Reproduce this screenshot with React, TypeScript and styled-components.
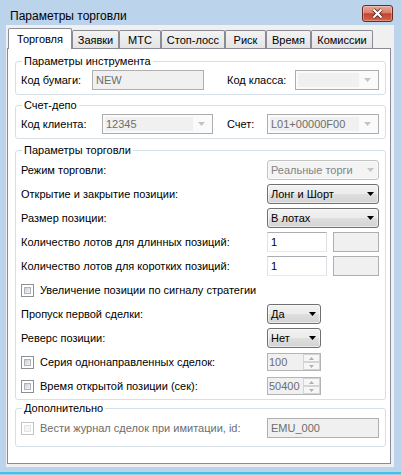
import styled, { createGlobalStyle } from 'styled-components';

const GlobalStyle = createGlobalStyle`
  html, body {
    margin: 0;
    padding: 0;
  }
  body {
    width: 401px;
    height: 475px;
    overflow: hidden;
    font-family: "Liberation Sans", Arial, sans-serif;
    font-size: 11px;
    color: #000;
  }
  * {
    box-sizing: border-box;
  }
`;

const Window = styled.div`
  width: 401px;
  height: 475px;
  display: flex;
  flex-direction: column;
  background: #bcd3ec;
`;

const TitleBar = styled.div`
  flex: none;
  height: 25px;
  display: flex;
  align-items: flex-start;
  justify-content: space-between;
  padding: 0 8px 0 10px;
`;

const Caption = styled.div`
  margin-top: 9px;
  font-size: 12px;
  line-height: 14px;
`;

const CloseButton = styled.div`
  margin-top: 5px;
  width: 31px;
  height: 17px;
  border: 1px solid #6b2a22;
  border-radius: 3px;
  background: linear-gradient(#e9a796, #d9806d 45%, #c4432d 52%, #d3654f);
  box-shadow: inset 0 0 0 1px rgba(255, 255, 255, 0.3);
  display: flex;
  align-items: center;
  justify-content: center;
`;

const Client = styled.div`
  flex: none;
  height: 442px;
  margin: 0 7px 0 6px;
  background: #f0f0f0;
  display: flex;
  flex-direction: column;
`;

const FrameBottom = styled.div`
  flex: 1;
  background: linear-gradient(#bcd3ec 0 5px, #3cc4e8 5px 7px, #a8cbe8 7px);
`;

const TabStrip = styled.div`
  flex: none;
  height: 23px;
  display: flex;
  align-items: flex-end;
  padding-left: 2px;
`;

const Tab = styled.div<{ $w: number; $active?: boolean }>`
  flex: none;
  width: ${({ $w }) => $w}px;
  height: ${({ $active }) => ($active ? 21 : 18)}px;
  margin-bottom: ${({ $active }) => ($active ? -1 : 0)}px;
  position: relative;
  z-index: ${({ $active }) => ($active ? 1 : 0)};
  border: 1px solid #898c95;
  border-bottom: none;
  border-radius: 2px 2px 0 0;
  background: ${({ $active }) =>
    $active ? '#fff' : 'linear-gradient(#f3f3f3, #e4e4e4)'};
  display: flex;
  align-items: center;
  justify-content: center;
  white-space: nowrap;
`;

const Panel = styled.div`
  flex: 1;
  margin: 0 3px 3px 1px;
  padding: 5px 4px 0 7px;
  background: #fff;
  border: 1px solid #898c95;
  display: flex;
  flex-direction: column;
`;

const Group = styled.fieldset<{ $top?: number; $pt?: number; $pb?: number }>`
  margin: ${({ $top }) => $top ?? 0}px 0 0 0;
  min-width: 0;
  min-inline-size: 0;
  padding: ${({ $pt }) => $pt ?? 1}px 6px ${({ $pb }) => $pb ?? 3}px 5px;
  border: 1px solid #d5dfe5;
  border-radius: 3px;
`;

const Legend = styled.legend`
  padding: 0 2px;
  margin-left: 1px;
  line-height: 14px;
`;

const Row = styled.div<{ $h?: number }>`
  height: ${({ $h }) => $h ?? 24}px;
  display: flex;
  align-items: center;
`;

const Label = styled.span<{ $w: number; $ml?: number; $off?: boolean }>`
  flex: none;
  width: ${({ $w }) => $w}px;
  margin-left: ${({ $ml }) => $ml ?? 0}px;
  white-space: nowrap;
  color: ${({ $off }) => ($off ? '#6d6d6d' : '#000')};
`;

const TextBox = styled.div<{ $w: number; $off?: boolean; $ml?: number }>`
  flex: none;
  width: ${({ $w }) => $w}px;
  height: 20px;
  margin-left: ${({ $ml }) => $ml ?? 0}px;
  padding-left: 3px;
  border: 1px solid;
  border-color: ${({ $off }) =>
    $off ? '#afafaf' : '#abadb3 #dbdfe6 #e3e9ef #e2e3ea'};
  background: ${({ $off }) => ($off ? '#f0f0f0' : '#fff')};
  color: ${({ $off }) => ($off ? '#6d6d6d' : '#000')};
  line-height: 18px;
  white-space: nowrap;
`;

const DropList = styled.div<{ $w: number; $off?: boolean }>`
  flex: none;
  width: ${({ $w }) => $w}px;
  height: 20px;
  padding: 0 4px 0 3px;
  border: 1px solid ${({ $off }) => ($off ? '#c2c2c2' : '#707070')};
  border-radius: 3px;
  background: ${({ $off }) =>
    $off
      ? '#f4f4f4'
      : 'linear-gradient(#f2f2f2, #ebebeb 50%, #dfdfdf 50%, #d3d3d3)'};
  box-shadow: inset 0 0 0 1px rgba(255, 255, 255, 0.55);
  color: ${({ $off }) => ($off ? '#838383' : '#000')};
  display: flex;
  align-items: center;
  justify-content: space-between;
  white-space: nowrap;
`;

const EditCombo = styled.div<{ $w: number }>`
  flex: none;
  width: ${({ $w }) => $w}px;
  height: 20px;
  padding: 2px;
  border: 1px solid #adadad;
  background: #fafafa;
  display: flex;
`;

const EditField = styled.div`
  flex: 1;
  padding-left: 1px;
  background: #f0f0f0;
  color: #6d6d6d;
  line-height: 14px;
  white-space: nowrap;
`;

const ArrowCell = styled.div`
  flex: none;
  width: 17px;
  display: flex;
  align-items: center;
  justify-content: center;
`;

const CheckLabel = styled.span<{ $w: number; $off?: boolean }>`
  flex: none;
  width: ${({ $w }) => $w}px;
  display: flex;
  align-items: center;
  gap: 6px;
  white-space: nowrap;
  color: ${({ $off }) => ($off ? '#6d6d6d' : '#000')};
`;

const CheckBox = styled.span<{ $off?: boolean }>`
  flex: none;
  width: 13px;
  height: 13px;
  padding: 2px;
  border: 1px solid ${({ $off }) => ($off ? '#c4c4c4' : '#8e8f8f')};
  background: #fff;
  display: flex;
  &::after {
    content: '';
    flex: 1;
    border: 1px solid ${({ $off }) => ($off ? '#e4e4e4' : '#aeb3b9')};
    background: ${({ $off }) =>
      $off ? '#f4f4f4' : 'linear-gradient(135deg, #cbcfd5, #f6f6f6)'};
  }
`;

const Spin = styled.div<{ $w: number }>`
  flex: none;
  width: ${({ $w }) => $w}px;
  height: 18px;
  border: 1px solid #b4b4b4;
  background: #f0f0f0;
  display: flex;
`;

const SpinText = styled.div`
  flex: 1;
  padding-left: 1px;
  color: #6d6d6d;
  line-height: 16px;
`;

const SpinButtons = styled.div`
  flex: none;
  width: 17px;
  display: flex;
  flex-direction: column;
`;

const SpinButton = styled.div`
  flex: 1;
  border: 1px solid #d4d4d4;
  background: #f6f6f6;
  display: flex;
  align-items: center;
  justify-content: center;
`;

function Arrow({ color = '#000' }: { color?: string }) {
  return (
    <svg width="7" height="4" viewBox="0 0 7 4">
      <path d="M0 0h7L3.5 4z" fill={color} />
    </svg>
  );
}

function SpinArrow({ up }: { up?: boolean }) {
  return (
    <svg width="5" height="3" viewBox="0 0 5 3">
      <path d={up ? 'M0 3h5L2.5 0z' : 'M0 0h5L2.5 3z'} fill="#b0b0b0" />
    </svg>
  );
}

function Combo({ w, value, off }: { w: number; value: string; off?: boolean }) {
  return (
    <DropList $w={w} $off={off}>
      <span>{value}</span>
      <Arrow color={off ? '#c4c4c4' : '#000'} />
    </DropList>
  );
}

function EditableCombo({ w, value }: { w: number; value: string }) {
  return (
    <EditCombo $w={w}>
      <EditField>{value}</EditField>
      <ArrowCell>
        <Arrow color="#c4c4c4" />
      </ArrowCell>
    </EditCombo>
  );
}

function Numeric({ value }: { value: string }) {
  return (
    <Spin $w={54}>
      <SpinText>{value}</SpinText>
      <SpinButtons>
        <SpinButton>
          <SpinArrow up />
        </SpinButton>
        <SpinButton>
          <SpinArrow />
        </SpinButton>
      </SpinButtons>
    </Spin>
  );
}

function Check({ text, off }: { text: string; off?: boolean }) {
  return (
    <CheckLabel $w={246} $off={off}>
      <CheckBox $off={off} />
      {text}
    </CheckLabel>
  );
}

const tabs = [
  { name: 'Торговля', w: 64 },
  { name: 'Заявки', w: 47 },
  { name: 'МТС', w: 42 },
  { name: 'Стоп-лосс', w: 64 },
  { name: 'Риск', w: 41 },
  { name: 'Время', w: 45 },
  { name: 'Комиссии', w: 62 },
];

export default function App() {
  return (
    <>
      <GlobalStyle />
      <Window>
        <TitleBar>
          <Caption>Параметры торговли</Caption>
          <CloseButton>
            <svg width="13" height="11" viewBox="0 0 13 11">
              <path
                d="M2.5 1.5L10.5 9.5M10.5 1.5L2.5 9.5"
                stroke="#4b1a12"
                strokeWidth="3.8"
              />
              <path
                d="M2.5 1.5L10.5 9.5M10.5 1.5L2.5 9.5"
                stroke="#fff"
                strokeWidth="2.2"
              />
            </svg>
          </CloseButton>
        </TitleBar>
        <Client>
          <TabStrip>
            {tabs.map((t, i) => (
              <Tab key={t.name} $w={t.w} $active={i === 0}>
                {t.name}
              </Tab>
            ))}
          </TabStrip>
          <Panel>
            <Group>
              <Legend>Параметры инструмента</Legend>
              <Row $h={22}>
                <Label $w={71}>Код бумаги:</Label>
                <TextBox $w={112} $off>
                  NEW
                </TextBox>
                <Label $w={68} $ml={23}>
                  Код класса:
                </Label>
                <EditableCombo w={84} value="" />
              </Row>
            </Group>

            <Group $top={3}>
              <Legend>Счет-депо</Legend>
              <Row $h={22}>
                <Label $w={81}>Код клиента:</Label>
                <EditableCombo w={111} value="12345" />
                <Label $w={40} $ml={14}>
                  Счет:
                </Label>
                <EditableCombo w={112} value="L01+00000F00" />
              </Row>
            </Group>

            <Group $top={4} $pb={1}>
              <Legend>Параметры торговли</Legend>
              <Row>
                <Label $w={246}>Режим торговли:</Label>
                <Combo w={112} value="Реальные торги" off />
              </Row>
              <Row>
                <Label $w={246}>Открытие и закрытие позиции:</Label>
                <Combo w={112} value="Лонг и Шорт" />
              </Row>
              <Row>
                <Label $w={246}>Размер позиции:</Label>
                <Combo w={112} value="В лотах" />
              </Row>
              <Row>
                <Label $w={246}>Количество лотов для длинных позиций:</Label>
                <TextBox $w={60}>1</TextBox>
                <TextBox $w={46} $ml={6} $off />
              </Row>
              <Row>
                <Label $w={246}>Количество лотов для коротких позиций:</Label>
                <TextBox $w={60}>1</TextBox>
                <TextBox $w={46} $ml={6} $off />
              </Row>
              <Row>
                <Check text="Увеличение позиции по сигналу стратегии" />
              </Row>
              <Row>
                <Label $w={246}>Пропуск первой сделки:</Label>
                <Combo w={54} value="Да" />
              </Row>
              <Row>
                <Label $w={246}>Реверс позиции:</Label>
                <Combo w={54} value="Нет" />
              </Row>
              <Row>
                <Check text="Серия однонаправленных сделок:" />
                <Numeric value="100" />
              </Row>
              <Row>
                <Check text="Время открытой позиции (сек):" />
                <Numeric value="50400" />
              </Row>
            </Group>

            <Group $top={1} $pt={2} $pb={7}>
              <Legend>Дополнительно</Legend>
              <Row $h={22}>
                <Check text="Вести журнал сделок при имитации, id:" off />
                <TextBox $w={112} $off>
                  EMU_000
                </TextBox>
              </Row>
            </Group>
          </Panel>
        </Client>
        <FrameBottom />
      </Window>
    </>
  );
}
